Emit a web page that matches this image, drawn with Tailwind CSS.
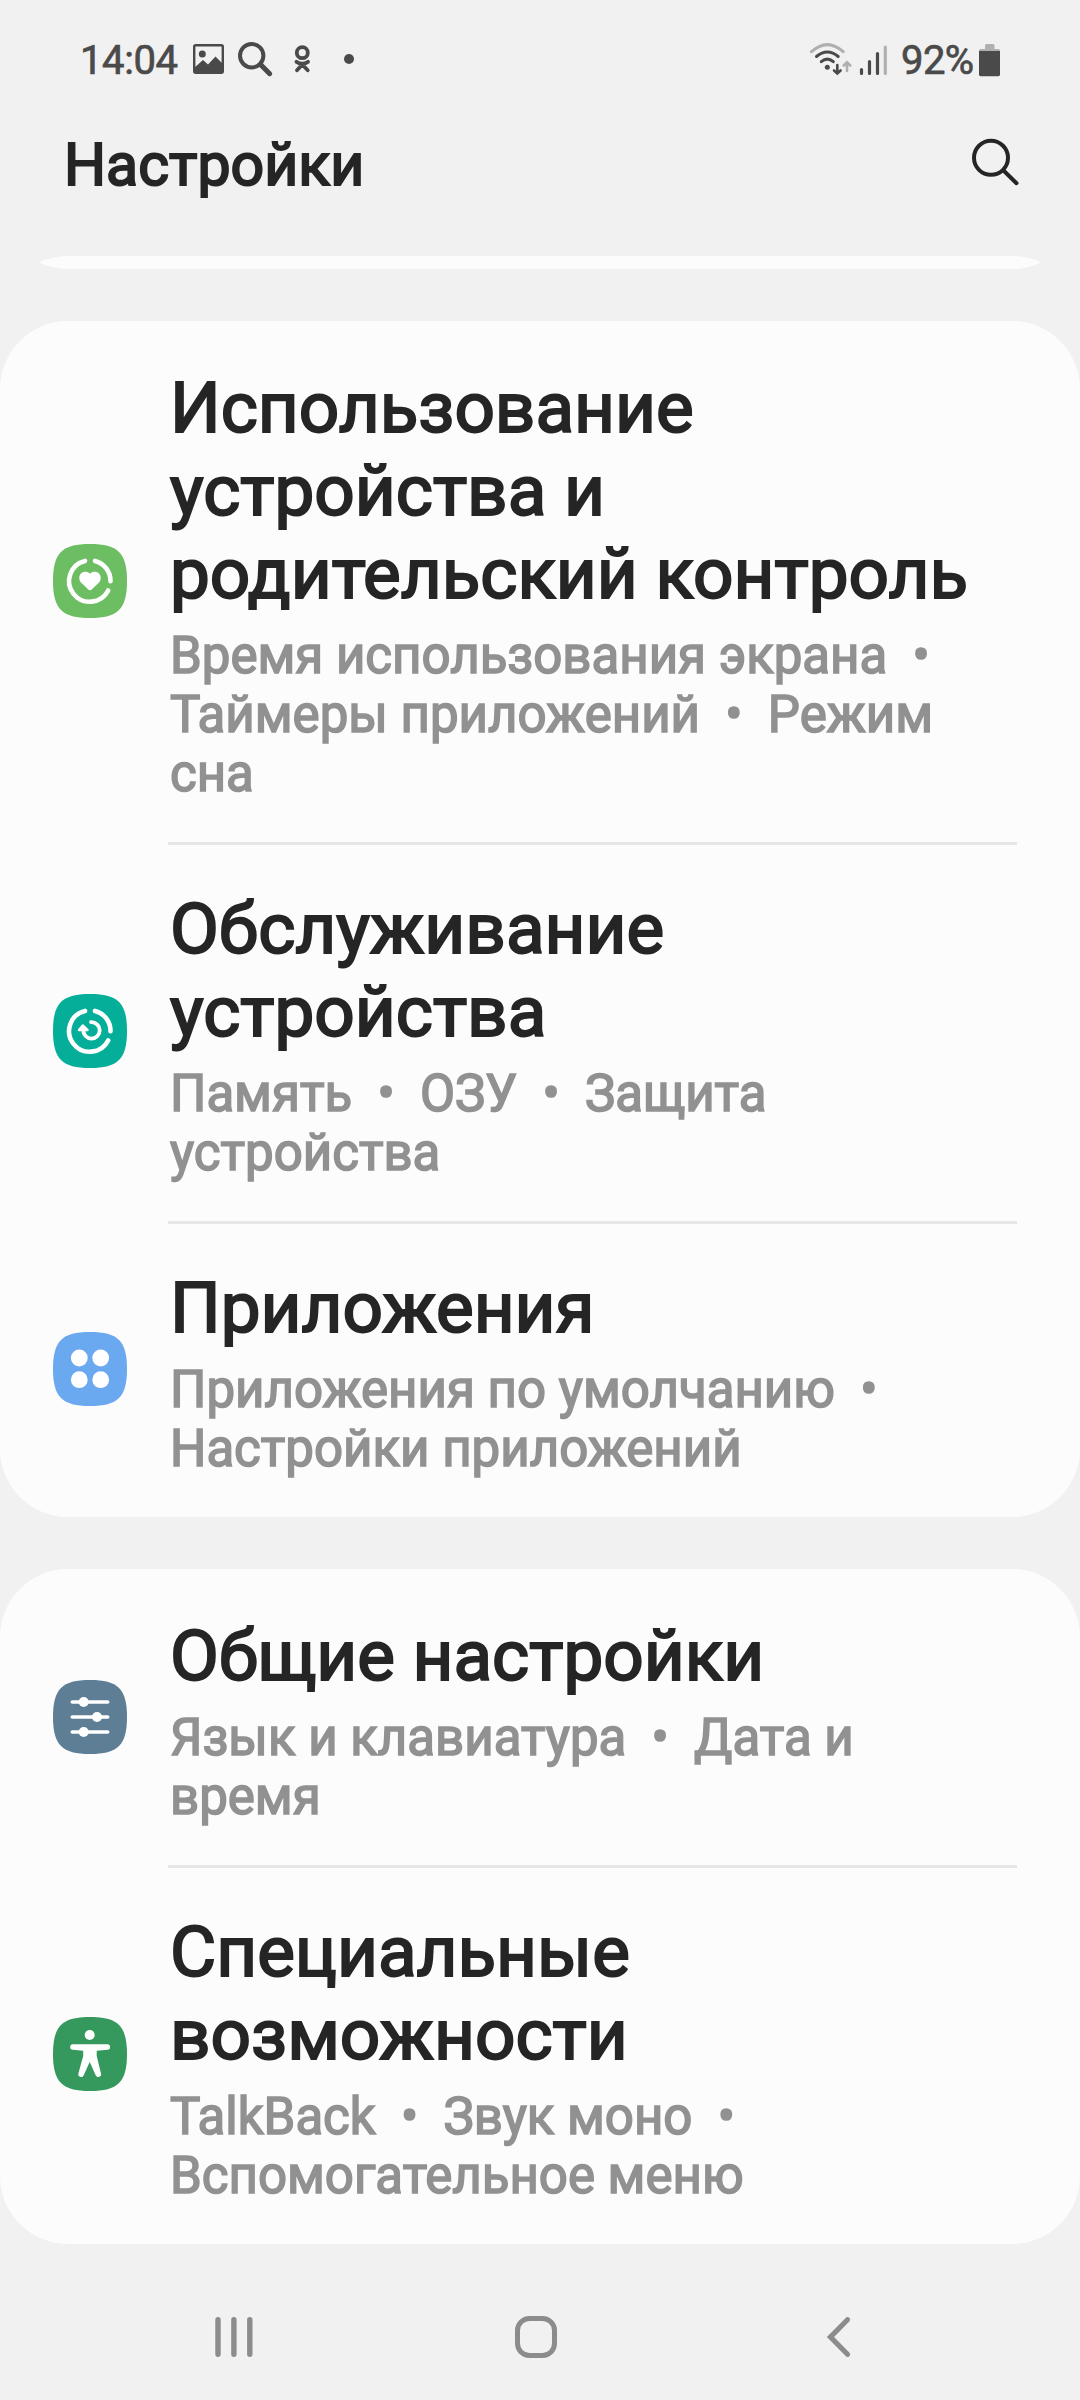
<!DOCTYPE html>
<html lang="ru">
<head>
<meta charset="utf-8">
<title>Настройки</title>
<script src="https://cdn.jsdelivr.net/npm/@tailwindcss/browser@4"></script>
</head>
<body class="bg-[#f1f1f1] font-['Roboto',sans-serif] text-[#252525]">
<div class="w-[1080px] h-[2400px] flex flex-col overflow-hidden">

  <!-- Status bar -->
  <div class="h-[122px] shrink-0 flex items-center pl-[80px] pr-[79px] text-[#4a4a4a] text-[40px] leading-none whitespace-nowrap [-webkit-text-stroke:0.7px_#4a4a4a]">
    <span class="w-[113px] tracking-[-0.4px]">14:04</span>
    <svg class="w-[167px] h-[40px] shrink-0" viewBox="193 41 167 40" fill="none" stroke-width="0">
      <rect x="194.2" y="45.2" width="28.6" height="27.6" rx="1.5" stroke="#4a4a4a" stroke-width="2.4"/>
      <circle cx="202.3" cy="54" r="3.5" fill="#4a4a4a"/>
      <path d="M194 68 L203 60 L208 64.500 L215.500 56.500 L223 64 V73 H194Z" fill="#4a4a4a"/>
      <circle cx="251.7" cy="55.7" r="11.700" stroke="#4a4a4a" stroke-width="4"/>
      <path d="M260.500 64.500 L269.700 73.700" stroke="#4a4a4a" stroke-width="5" stroke-linecap="round"/>
      <circle cx="302.3" cy="52.7" r="5.500" stroke="#4a4a4a" stroke-width="3.800"/>
      <path d="M296.500 61.800 Q302.300 65.500 308 61.800 M302.300 64.500 L297 70.300 M302.300 64.500 L307.700 70.300" stroke="#4a4a4a" stroke-width="3.800" stroke-linecap="round"/>
      <circle cx="349" cy="59" r="5" fill="#4a4a4a"/>
    </svg>
    <svg class="w-[80px] h-[40px] shrink-0 ml-auto" viewBox="808 41 80 40" fill="none" stroke-linecap="round" stroke-width="3">
      <path d="M811.500 51.700 Q827.300 37.500 843.200 51.700" stroke="#b0b0b0"/>
      <path d="M816.500 56.500 Q827.300 47.500 838.200 56.500" stroke="#4a4a4a"/>
      <path d="M821.300 61.700 Q827.300 56.500 833.300 61.700" stroke="#4a4a4a"/>
      <circle cx="827.3" cy="67.300" r="2.500" fill="#4a4a4a" stroke-width="0"/>
      <path d="M837.300 65 V73 M834 70.500 L837.300 73.500 L840.600 70.500" stroke="#4a4a4a" stroke-width="2.600"/>
      <path d="M847 71 V63 M843.700 65.500 L847 62.300 L850.300 65.500" stroke="#b0b0b0" stroke-width="2.600"/>
      <path d="M861.500 69.500 V73.500 M869.500 61.500 V73.500 M877.500 53.500 V73.500" stroke="#4a4a4a" stroke-width="3.200"/>
      <path d="M885.300 47 V73.500" stroke="#b0b0b0" stroke-width="3.200"/>
    </svg>
    <span class="ml-[13px] w-[78px] tracking-[-0.6px]">92%</span>
    <svg class="w-[22px] h-[34px] shrink-0 -mt-[2px]" viewBox="979 42 22 34">
      <path d="M985 47 V44.500 Q985 43 986.500 43 H993 Q994.500 43 994.500 44.500 V48 H998.500 Q1000 48 1000 50 H979 Q979 48 980.500 48 H985Z" fill="#b0b0b0"/>
      <path d="M979 50 H1000 V73.500 Q1000 75.300 998.500 75.300 H980.500 Q979 75.300 979 73.500Z" fill="#4a4a4a"/>
    </svg>
  </div>

  <!-- Title bar -->
  <header class="h-[85px] shrink-0 flex items-center justify-between pl-[64px] pr-[60px]">
    <h1 class="text-[59px] leading-none -mt-px [-webkit-text-stroke:2px_#252525]">Настройки</h1>
    <svg class="w-[50px] h-[50px] -mt-[6px]" viewBox="970 136.500 50 50" fill="none" stroke="#252525" stroke-width="4" stroke-linecap="round">
      <circle cx="991" cy="157.300" r="17"/>
      <path d="M1003.500 170 L1016.500 182.700"/>
    </svg>
  </header>

  <!-- End of the previous card, scrolled under the title bar -->
  <svg class="mt-[49px] w-full h-[13px] shrink-0" viewBox="0 0 1080 13"><path d="M39 6.500 A68 68 0 0 1 68 0 H1012 A68 68 0 0 1 1041 6.500 A68 68 0 0 1 1012 13 H68 A68 68 0 0 1 39 6.500Z" fill="#fcfcfc"/></svg>

  <!-- Card 1 -->
  <section class="mt-[52px] shrink-0 rounded-[68px] bg-[#fcfcfc]">
    <div class="flex items-center pl-[53px] pr-[63px]">
      <svg class="w-[74px] h-[74px] shrink-0 mr-[41px] -mt-px" viewBox="0 0 74 74" fill="none">
        <path d="M0 37 C0 9 9 0 37 0 S74 9 74 37 65 74 37 74 0 65 0 37Z" fill="#6dbd63"/>
        <path d="M42 16.900 A20.700 20.700 0 0 1 57.500 37.300 M55.200 46.500 A20.700 20.700 0 1 1 32 16.900" stroke="#fff" stroke-width="4.600" stroke-linecap="round"/>
        <path d="M37 29.700 C40.500 26.300 47.700 27.500 47.700 34 C47.700 36.200 46.800 37.800 45.500 39.100 L38.400 45.700 Q37 46.900 35.600 45.700 L28.500 39.100 C27.200 37.800 26.300 36.200 26.300 34 C26.300 27.500 33.500 26.300 37 29.700Z" fill="#fff"/>
      </svg>
      <div class="flex-1 pt-[45px] pb-[39px] whitespace-nowrap">
        <h2 class="pl-[2px] text-[71px] leading-[83px] [-webkit-text-stroke:2px_#252525]">Использование<br>устройства и<br>родительский контроль</h2>
        <p class="pl-[2px] mt-[11px] text-[51px] leading-[59px] text-[#919191] whitespace-pre [-webkit-text-stroke:1.6px_#919191]">Время использования экрана  •<br>Таймеры приложений  •  Режим<br>сна</p>
      </div>
    </div>
    <div class="flex items-center pl-[53px] pr-[63px]">
      <svg class="w-[74px] h-[74px] shrink-0 mr-[41px] -mt-px" viewBox="0 0 74 74" fill="none">
        <path d="M0 37 C0 9 9 0 37 0 S74 9 74 37 65 74 37 74 0 65 0 37Z" fill="#05ae98"/>
        <path d="M42 16.900 A20.700 20.700 0 0 1 57.500 37.300 M55.200 46.500 A20.700 20.700 0 1 1 32 16.900" stroke="#fff" stroke-width="4.600" stroke-linecap="round"/>
        <path d="M38 28.200 A8.200 8.200 0 1 1 30.300 36" stroke="#fff" stroke-width="3.800" stroke-linecap="round"/>
        <path d="M29.700 31.500 L26 36 H34.500Z" fill="#fff" stroke="#fff" stroke-width="2.400" stroke-linejoin="round"/>
      </svg>
      <div class="flex-1 pt-[42px] pb-[39px] border-t-3 border-[#e6e6e6] whitespace-nowrap">
        <h2 class="pl-[2px] text-[71px] leading-[83px] [-webkit-text-stroke:2px_#252525]">Обслуживание<br>устройства</h2>
        <p class="pl-[2px] mt-[11px] text-[51px] leading-[59px] text-[#919191] whitespace-pre [-webkit-text-stroke:1.6px_#919191]">Память  •  ОЗУ  •  Защита<br>устройства</p>
      </div>
    </div>
    <div class="flex items-center pl-[53px] pr-[63px]">
      <svg class="w-[74px] h-[74px] shrink-0 mr-[41px]" viewBox="0 0 74 74">
        <path d="M0 37 C0 9 9 0 37 0 S74 9 74 37 65 74 37 74 0 65 0 37Z" fill="#6aa8f0"/>
        <g fill="#fff"><circle cx="26.300" cy="26" r="8.400"/><circle cx="47.700" cy="26" r="8.400"/><circle cx="26.300" cy="47.700" r="8.400"/><circle cx="47.700" cy="47.700" r="8.400"/></g>
      </svg>
      <div class="flex-1 pt-[42px] pb-[39px] border-t-3 border-[#e6e6e6] whitespace-nowrap">
        <h2 class="pl-[2px] text-[71px] leading-[83px] [-webkit-text-stroke:2px_#252525]">Приложения</h2>
        <p class="pl-[2px] mt-[11px] text-[51px] leading-[59px] text-[#919191] whitespace-pre [-webkit-text-stroke:1.6px_#919191]">Приложения по умолчанию  •<br>Настройки приложений</p>
      </div>
    </div>
  </section>

  <!-- Card 2 -->
  <section class="mt-[52px] shrink-0 rounded-[68px] bg-[#fcfcfc]">
    <div class="flex items-center pl-[53px] pr-[63px]">
      <svg class="w-[74px] h-[74px] shrink-0 mr-[41px]" viewBox="0 0 74 74">
        <path d="M0 37 C0 9 9 0 37 0 S74 9 74 37 65 74 37 74 0 65 0 37Z" fill="#5e7e96"/>
        <path d="M19.300 22 H54.700 M19.300 37 H54.700 M19.300 52 H54.700" stroke="#fff" stroke-width="3.600" stroke-linecap="round"/>
        <g fill="#fff"><circle cx="30.700" cy="22" r="5"/><circle cx="44" cy="37" r="5"/><circle cx="30.700" cy="52" r="5"/></g>
      </svg>
      <div class="flex-1 pt-[45px] pb-[39px] whitespace-nowrap">
        <h2 class="pl-[2px] text-[71px] leading-[83px] [-webkit-text-stroke:2px_#252525]">Общие настройки</h2>
        <p class="pl-[2px] mt-[11px] text-[51px] leading-[59px] text-[#919191] whitespace-pre [-webkit-text-stroke:1.6px_#919191]">Язык и клавиатура  •  Дата и<br>время</p>
      </div>
    </div>
    <div class="flex items-center pl-[53px] pr-[63px]">
      <svg class="w-[74px] h-[74px] shrink-0 mr-[41px] -mt-px" viewBox="0 0 74 74">
        <path d="M0 37 C0 9 9 0 37 0 S74 9 74 37 65 74 37 74 0 65 0 37Z" fill="#35985c"/>
        <circle cx="36.700" cy="18" r="5" fill="#fff"/>
        <path d="M20 27.300 H54.300 A2.700 2.700 0 0 1 54.500 32.700 L43.700 33.700 V39 L48 56.500 A2.800 2.800 0 0 1 42.800 58.500 L36.700 45 L30.600 58.500 A2.800 2.800 0 0 1 25.400 56.500 L30.200 39 V33.700 L19.800 32.700 A2.700 2.700 0 0 1 20 27.300Z" fill="#fff"/>
      </svg>
      <div class="flex-1 pt-[42px] pb-[39px] border-t-3 border-[#e6e6e6] whitespace-nowrap">
        <h2 class="pl-[2px] text-[71px] leading-[83px] [-webkit-text-stroke:2px_#252525]">Специальные<br>возможности</h2>
        <p class="pl-[2px] mt-[11px] text-[51px] leading-[59px] text-[#919191] whitespace-pre [-webkit-text-stroke:1.6px_#919191]">TalkBack  •  Звук моно  •<br>Вспомогательное меню</p>
      </div>
    </div>
  </section>

  <!-- Navigation bar -->
  <nav class="mt-[68px] h-[50px] shrink-0 flex items-center justify-between pl-[209px] pr-[216px]">
    <svg class="w-[50px] h-[50px]" viewBox="209 2312 50 50" stroke="#8c8c8c" stroke-width="5.400" stroke-linecap="round"><path d="M218 2319.700 V2354.300 M233.900 2319.700 V2354.300 M249.800 2319.700 V2354.300"/></svg>
    <svg class="w-[50px] h-[50px]" viewBox="512 2312 50 50" fill="none" stroke="#8c8c8c" stroke-width="5"><rect x="517.500" y="2318.500" width="37" height="37" rx="12"/></svg>
    <svg class="w-[50px] h-[50px]" viewBox="814 2312 50 50" fill="none" stroke="#8c8c8c" stroke-width="5.200" stroke-linecap="round" stroke-linejoin="miter"><path d="M847.500 2319.700 L830.500 2337 L847.500 2354.300"/></svg>
  </nav>
</div>
</body>
</html>
